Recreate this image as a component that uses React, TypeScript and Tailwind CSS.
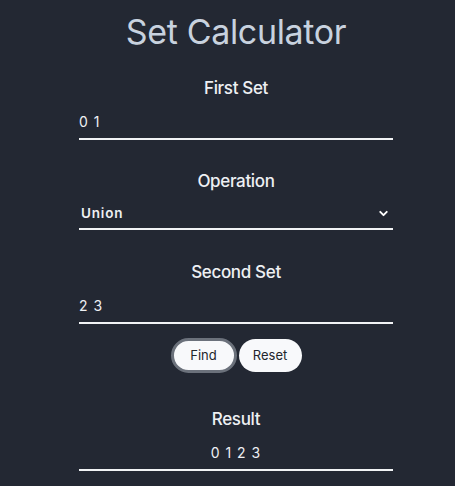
import { ChevronDown } from 'lucide-react';

const FONT = { fontFamily: 'Inter, "Open Sans", sans-serif' };

function Label({ children }: { children: React.ReactNode }) {
  return <div className="text-[17px] font-medium text-[#eef0f3] text-center leading-6 tracking-[-0.02em]">{children}</div>;
}

function Field({ value, center }: { value: string; center?: boolean }) {
  return (
    <div className={`border-b-2 border-[#f1f3f5] h-[35px] flex items-center text-[14px] text-[#eef0f3] tracking-[0.07em] ${center ? 'justify-center' : ''}`}>
      {value}
    </div>
  );
}

export default function App() {
  return (
    <div className="min-h-[486px] bg-[#232833] flex justify-center pl-[17px]" style={FONT}>
      <div className="w-[314px] flex flex-col">
        <h1 className="text-[34px] leading-[44px] mt-[10px] text-center text-[#c8d2df] tracking-[-0.01em]">Set Calculator</h1>

        <div className="mt-[22px]"><Label>First Set</Label></div>
        <div className="mt-[5px]"><Field value="0 1" /></div>

        <div className="mt-[29px]"><Label>Operation</Label></div>
        <div className="mt-[5px] border-b-2 border-[#f1f3f5] h-[32px] flex items-center justify-between pr-[3px]">
          <span className="text-[13.5px] font-semibold text-[#eef0f3] tracking-[0.06em] pl-[2px]">Union</span>
          <ChevronDown className="w-[13px] h-[13px] text-white" strokeWidth={3.5} />
        </div>

        <div className="mt-[30px]"><Label>Second Set</Label></div>
        <div className="mt-[5px]"><Field value="2 3" /></div>

        <div className="mt-[14px] flex justify-center gap-[2px]">
          <button className="h-[35px] w-[66px] rounded-full bg-[#f8f9fb] border-[3px] border-[#6b717b] text-[13px] text-[#23262c]">Find</button>
          <button className="h-[33px] w-[63px] mt-[1px] rounded-full bg-[#f8f9fb] text-[13px] text-[#23262c]">Reset</button>
        </div>

        <div className="mt-[34px]"><Label>Result</Label></div>
        <div className="mt-[5px]"><Field value="0 1 2 3" center /></div>
      </div>
    </div>
  );
}
